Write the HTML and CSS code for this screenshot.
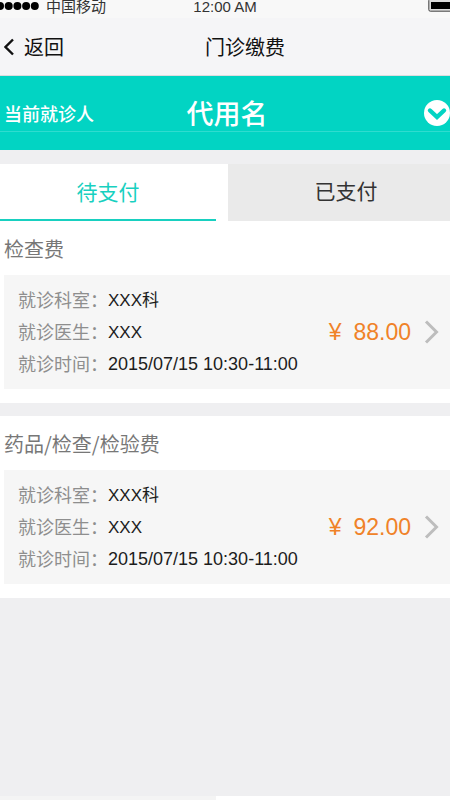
FILE: index.html
```html
<!DOCTYPE html>
<html lang="zh-CN">
<head>
<meta charset="utf-8">
<meta name="viewport" content="width=device-width, initial-scale=1">
<title>门诊缴费</title>
<link rel="stylesheet" href="styles.css">
</head>
<body>
<div class="status">
  <div class="carrier">
    <svg class="signal" width="40" height="12" viewBox="0 0 40 12" aria-hidden="true"><circle cx="0" cy="6" r="4"/><circle cx="8.7" cy="6" r="4"/><circle cx="17.4" cy="6" r="4"/><circle cx="26.1" cy="6" r="4"/><circle cx="34.8" cy="6" r="4"/></svg>
    <span>中国移动</span>
  </div>
  <span class="time">12:00 AM</span>
  <svg class="battery" width="22" height="12" viewBox="0 0 22 12" aria-hidden="true"><rect x=".8" y="-1" width="28" height="12.2" rx="1.5" fill="#ddd" stroke="#444"/><path d="M3 2h19v7H3z"/></svg>
</div>
<header class="nav">
  <a class="back" href="#"><svg width="12" height="18" viewBox="0 0 12 18" aria-hidden="true"><path d="M9 1.5 1.5 9 9 16.5" fill="none" stroke="#111" stroke-width="2.4"/></svg>返回</a>
  <h1>门诊缴费</h1>
</header>
<button class="patient" type="button">
  <span class="patient-label">当前就诊人</span>
  <span class="patient-name">代用名</span>
  <svg width="26" height="28" viewBox="0 0 26 28" aria-hidden="true"><circle cx="13" cy="15" r="13" fill="#fff"/><path d="m6 12.5 7 6.5 7-6.5" fill="none" stroke="#02d4c3" stroke-width="4.4" stroke-linecap="round"/></svg>
</button>
<main>
  <div class="tabs">
    <button class="tab active" type="button">待支付</button>
    <button class="tab" type="button">已支付</button>
  </div>
  <section class="bill">
    <h2>检查费</h2>
    <a class="card" href="#">
      <dl>
        <div><dt>就诊科室：</dt><dd>XXX科</dd></div>
        <div><dt>就诊医生：</dt><dd>XXX</dd></div>
        <div><dt>就诊时间：</dt><dd class="date">2015/07/15 10:30-11:00</dd></div>
      </dl>
      <span class="price"><span>¥</span>88.00</span>
      <svg width="16" height="24" viewBox="0 0 16 24" aria-hidden="true"><path d="M2 1.5 12.5 12 2 22.5" fill="none" stroke="#bdbdbd" stroke-width="3"/></svg>
    </a>
  </section>
  <section class="bill">
    <h2>药品/检查/检验费</h2>
    <a class="card" href="#">
      <dl>
        <div><dt>就诊科室：</dt><dd>XXX科</dd></div>
        <div><dt>就诊医生：</dt><dd>XXX</dd></div>
        <div><dt>就诊时间：</dt><dd class="date">2015/07/15 10:30-11:00</dd></div>
      </dl>
      <span class="price"><span>¥</span>92.00</span>
      <svg width="16" height="24" viewBox="0 0 16 24" aria-hidden="true"><path d="M2 1.5 12.5 12 2 22.5" fill="none" stroke="#bdbdbd" stroke-width="3"/></svg>
    </a>
  </section>
</main>
<footer class="bottom"></footer>
</body>
</html>
```
FILE: styles.css
```css
* {
  box-sizing: border-box;
}

body {
  margin: 0;
  min-height: 100vh;
  display: flex;
  flex-direction: column;
  background: #efeff1;
  color: #1c1c1c;
  font-family: "Liberation Sans", "Noto Sans CJK SC", sans-serif;
}

h1, h2, dl, dd {
  margin: 0;
  font-weight: 400;
}

a {
  color: inherit;
  text-decoration: none;
}

button {
  border: 0;
  padding: 0;
  font-family: inherit;
}

.status {
  display: grid;
  grid-template-columns: 1fr auto 1fr;
  height: 18px;
  background: #f8f8f8;
  color: #333;
  font-size: 15px;
  line-height: 14px;
}

.carrier {
  display: flex;
  gap: 6px;
}

.time {
  line-height: 13px;
}

.battery {
  justify-self: end;
}

.nav {
  display: grid;
  grid-template-columns: 205fr 245fr;
  align-items: center;
  height: 58px;
  background: #f5f5f7;
  border-bottom: 1px solid #dcdcde;
  color: #111;
}

.nav h1 {
  font-size: 20px;
}

.back {
  display: flex;
  align-items: center;
  gap: 8px;
  padding-left: 4px;
  font-size: 20px;
}

.patient {
  display: grid;
  grid-template-columns: 1fr auto 1fr;
  align-items: center;
  height: 74px;
  padding: 0 0 2px 4px;
  background: linear-gradient(#2fdccf, #2fdccf) 0 55px / 100% 1px no-repeat #02d4c3;
  color: #fff;
}

.patient-label {
  padding-top: 2px;
  font-size: 18px;
  font-weight: 500;
  text-align: left;
}

.patient-name {
  font-size: 27px;
  font-weight: 500;
}

.patient svg {
  justify-self: end;
}

main {
  display: grid;
  gap: 13px;
  padding-top: 14px;
}

.tabs {
  display: grid;
  grid-template-columns: 216fr 222fr;
  gap: 12px;
  margin-bottom: -13px;
  background: #fff;
}

.tab {
  height: 57px;
  padding: 0 0 6px 14px;
  background: #eaeaea;
  color: #333;
  font-size: 21px;
}

.tab.active {
  padding: 0 0 2px;
  background: #fff;
  color: #18d0c0;
  border-bottom: 2px solid #18d0c0;
}

.bill {
  padding: 0 0 14px 4px;
  background: #fff;
}

.bill h2 {
  padding-top: 2px;
  color: #777;
  font-family: "Noto Sans CJK SC", sans-serif;
  font-size: 20px;
  line-height: 52px;
}

.card {
  display: flex;
  align-items: center;
  padding: 9px 10px 9px 14px;
  background: #f6f6f6;
}

.card dl {
  flex: 1;
}

.card dl div {
  display: flex;
  height: 32px;
  line-height: 34px;
}

.card dt {
  color: #8e8e8e;
  font-size: 18px;
}

.card dd {
  font-size: 17px;
}

.card .date {
  font-size: 18px;
  line-height: 32px;
}

.price {
  display: flex;
  gap: 12px;
  margin-right: 13px;
  color: #f08228;
  font-size: 23px;
}

.bottom {
  height: 4px;
  margin-top: auto;
  background: linear-gradient(90deg, #f4f4f4 48%, #fff 48%);
}
```
